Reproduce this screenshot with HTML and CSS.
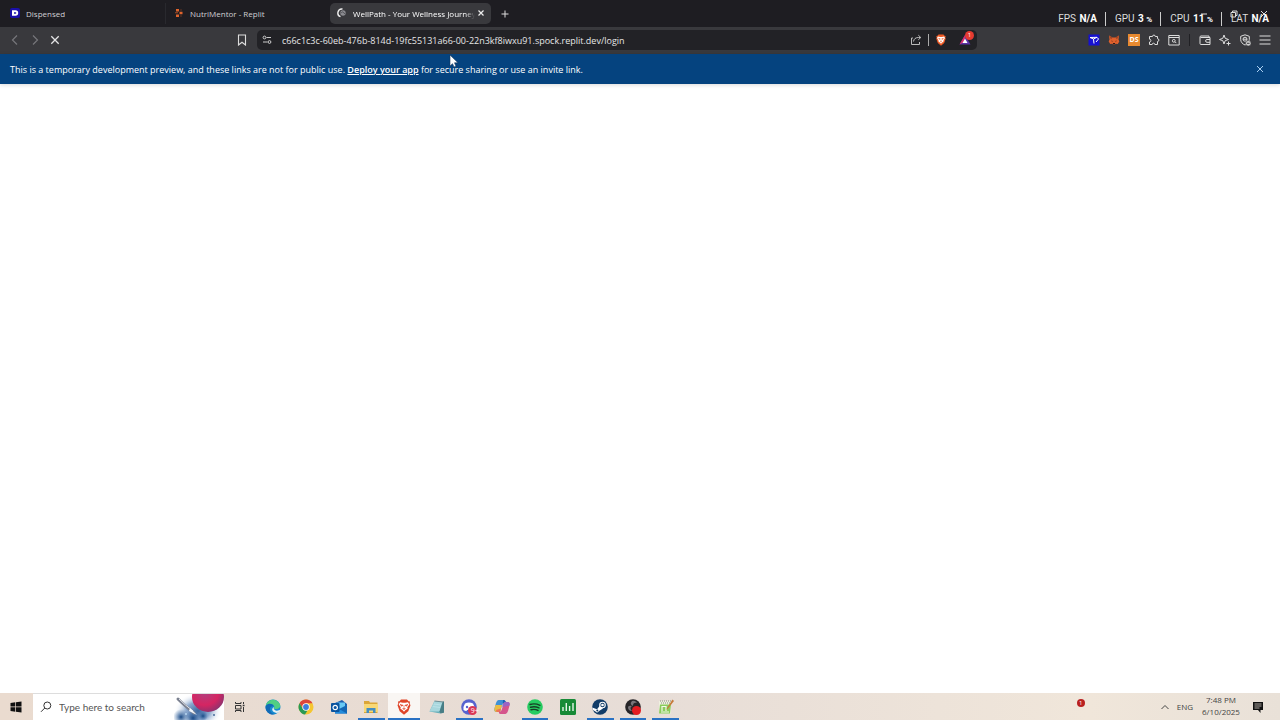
FILE: index.html
```html
<!DOCTYPE html>
<html lang="en">
<head>
    <meta charset="utf-8">
    <title>WellPath - Your Wellness Journey</title>
    <link rel="stylesheet" href="styles.css">
</head>
<body>
    <header class="tab-strip">
        <div class="tabs">
            <button class="tab">
                <svg class="favicon" viewBox="0 0 10 10"><rect width="10" height="10" rx="2" fill="#1a0fa8"/><path d="M2 2.300h3.500a2.700 2.700 0 0 1 0 5.400H2zM4 4.200v1.600h1.500a.8.8 0 0 0 0-1.600z" fill="#fff" fill-rule="evenodd"/></svg>
                <span class="tab-title">Dispensed</span>
            </button>
            <button class="tab divided">
                <svg class="favicon" viewBox="0 0 10 10"><path d="M2 1h3v2.500H2zM5.500 3.700h3v2.600h-3zM2 6.500h3V9H2z" fill="#e0642c"/><path d="M6.500 1.500h1v1h-1zM1 4.300h3v1H1zM6.500 7.500h1v1h-1z" fill="#a34b27"/></svg>
                <span class="tab-title">NutriMentor - Replit</span>
            </button>
        </div>
        <div class="tab active">
            <svg class="favicon" viewBox="0 0 10 10" fill="none"><path d="M5.500 1A4 4 0 0 0 3.500 8.700" stroke="#eee" stroke-width="1.400"/><circle cx="6" cy="5" r="2.700" fill="#8b8b90"/><path d="M4 4.500c1 .5 1-1 2-.5s0 1.500 2 1.500" stroke="#333338" stroke-width=".6"/></svg>
            <span class="tab-title">WellPath - Your Wellness Journey</span>
            <button class="icon-button tab-close" aria-label="Close tab">
                <svg class="icon-tiny" viewBox="0 0 8 8"><path d="M1.500 1.500l5 5m0-5l-5 5" stroke="#eee" stroke-width="1.200"/></svg>
            </button>
        </div>
        <button class="icon-button new-tab" aria-label="New tab">
            <svg class="icon-tiny" viewBox="0 0 8 8"><path d="M4 .5v7M.5 4h7" stroke="#ddd"/></svg>
        </button>
        <div class="window-controls">
            <button class="icon-button" aria-label="Minimize"><svg class="icon-tiny" viewBox="0 0 8 8"><path d="M1 4h6" stroke="#ddd"/></svg></button>
            <button class="icon-button" aria-label="Restore"><svg class="icon-tiny" viewBox="0 0 8 8" fill="none"><path d="M1 2.500h4.500V7H1zM2.500 2.500V1H7v4.500H5.500" stroke="#ddd"/></svg></button>
            <button class="icon-button" aria-label="Close"><svg class="icon-tiny" viewBox="0 0 8 8"><path d="M1 1l6 6m0-6L1 7" stroke="#ddd"/></svg></button>
        </div>
    </header>

    <nav class="toolbar">
        <div class="nav-buttons">
            <button class="icon-button" aria-label="Back"><svg class="icon" viewBox="0 0 12 12" fill="none"><path d="M8 1.500L3.500 6 8 10.500" stroke="#77777b" stroke-width="1.200"/></svg></button>
            <button class="icon-button" aria-label="Forward"><svg class="icon" viewBox="0 0 12 12" fill="none"><path d="M4 1.500L8.500 6 4 10.500" stroke="#77777b" stroke-width="1.200"/></svg></button>
            <button class="icon-button" aria-label="Stop"><svg class="icon" viewBox="0 0 12 12"><path d="M2.300 2.300l7.400 7.400m0-7.400L2.300 9.700" stroke="#e4e4e6" stroke-width="1.300"/></svg></button>
        </div>
        <div class="address">
            <button class="icon-button" aria-label="Bookmark"><svg class="icon" viewBox="0 0 12 12" fill="none"><path d="M2.500 1h7v10L6 8.200 2.500 11z" stroke="#ddd" stroke-width="1.100"/></svg></button>
            <div class="url-bar">
                <svg class="icon" viewBox="0 0 12 12" fill="none" stroke="#ccc"><circle cx="3.500" cy="3.500" r="1.400"/><circle cx="8.500" cy="8" r="1.400"/><path d="M5.500 3.500H10M2 8h4.500"/></svg>
                <input class="url" type="text" aria-label="Address" value="c66c1c3c-60eb-476b-814d-19fc55131a66-00-22n3kf8iwxu91.spock.replit.dev/login">
                <button class="icon-button" aria-label="Share"><svg class="icon" viewBox="0 0 12 12" fill="none" stroke="#bbb"><path d="M3 4H1.500v6.500h8V8M3.500 7.500c.3-2.500 2-4 5-4h2M8.300 1.200l2.500 2.300-2.500 2.300"/></svg></button>
                <span class="separator light"></span>
                <button class="icon-button" aria-label="Brave Shields"><svg class="icon" viewBox="0 0 12 12"><path d="M3.500.5h5l1 1.200 1.200.3-.4 1.500.4 1.300-1.500 4.300L6 11.700 2.800 9.100 1.300 4.800l.4-1.300L1.300 2l1.200-.3z" fill="#f05a24"/><path d="M3 2.600l2 .3h2l2-.3 1 1.500-1.500 2.200.2 1L7.200 8.500 6 9.700 4.800 8.500 3.300 7.300l.2-1L2 4.100z" fill="#fff"/><path d="M3.500 4.300l1.800.5-.7.700zM8.500 4.300l-1.800.5.7.7zM6 5.500v2M5 7.500l1 .6 1-.6" fill="#f05a24" stroke="#f05a24" stroke-width=".4"/></svg></button>
                <button class="icon-button rewards" aria-label="Brave Rewards">
                    <svg class="icon" viewBox="0 0 12 12"><path d="M6 1l5.500 9.500H.5z" fill="#5b32a8"/><path d="M6 1L.5 10.500 4 8.500 6 5z" fill="#d92c68"/><path d="M6 4.500l2.500 4.500H3.500z" fill="#fff"/></svg>
                    <span class="badge">1</span>
                </button>
            </div>
        </div>
        <div class="extensions">
            <button class="icon-button" aria-label="Cursor extension"><svg class="icon" viewBox="0 0 12 12" fill="none"><path d="M.5.500h11v11H.5z" fill="#1610d2"/><path d="M2 3.500l3.500 1.500L6 9.500M2 3.500l7-.2L10.500 5 8 8M5.500 5l3.500-1.700" stroke="#fff" stroke-width="1"/></svg></button>
            <button class="icon-button" aria-label="MetaMask"><svg class="icon" viewBox="0 0 12 12"><path d="M1 1.500l3.500 2h3L11 1.500l-.5 4 .8 2-1.500 2.500-2.300-.3-.5.800H5l-.5-.8-2.300.3L.7 7.500l.8-2z" fill="#e0602c"/><path d="M1 1.500l3.500 2L3 5.500zM11 1.500l-3.500 2L9 5.500z" fill="#9c4526"/><path d="M3.500 6.500l1.500.7-1.200.3zM8.500 6.500L7 7.200l1.200.3zM5 9h2v1.300H5z" fill="#2a1a18"/></svg></button>
            <button class="icon-button" aria-label="DS extension"><span class="ds">DS</span></button>
            <button class="icon-button" aria-label="Extensions"><svg class="icon" viewBox="0 0 12 12" fill="none"><path d="M1.500 2.500h3a1.400 1.400 0 0 1 2.800 0H9.500v2.200a1.400 1.400 0 0 1 0 2.800v3H6.800a1.300 1.300 0 0 0-2.600 0H1.500V8a1.400 1.400 0 0 0 0-2.800z" stroke="#ddd"/></svg></button>
            <button class="icon-button" aria-label="Page search"><svg class="icon" viewBox="0 0 12 12" fill="none" stroke="#ddd"><path d="M.8 1.500h10.400v9.500H.8zM1 3.500h10"/><circle cx="5.800" cy="6.800" r="1.400"/><path d="M7 7.800l1.300 1.300"/></svg></button>
            <span class="separator"></span>
            <button class="icon-button" aria-label="Wallet"><svg class="icon" viewBox="0 0 12 12" fill="none" stroke="#ddd"><path d="M10 3.500V2H2a1 1 0 0 0-1 1v6.500a1 1 0 0 0 1 1h9v-7H1.500M11 5.500H8a1.400 1.400 0 0 0 0 2.800h3"/></svg></button>
            <button class="icon-button" aria-label="Leo AI"><svg class="icon" viewBox="0 0 12 12" fill="none" stroke="#ddd"><path d="M5 1l1.200 3.300L9.500 5.500 6.200 6.700 5 10 3.800 6.700.5 5.500l3.300-1.200zM9.500 7.500v4M7.500 9.500h4"/></svg></button>
            <button class="icon-button" aria-label="VPN"><svg class="icon" viewBox="0 0 12 12" fill="none" stroke="#ddd"><path d="M6 .8l4.300 1.500v3.200C10.300 8 8.500 10 6 11 3.500 10 1.700 8 1.700 5.500V2.300z"/><circle cx="6" cy="5.200" r="2"/><path d="M4 5.200h4"/><circle cx="9.300" cy="9.300" r="2.700" fill="#ccc" stroke="#39393d" stroke-width=".5"/><path d="M8 9.300h2.600" stroke="#39393d"/></svg></button>
            <button class="icon-button" aria-label="Menu"><svg class="icon" viewBox="0 0 12 12"><path d="M.5 2h11M.5 6h11M.5 10h11" stroke="#ddd" stroke-width="1.200"/></svg></button>
        </div>
    </nav>

    <div class="preview-banner">
        <p class="banner-text">This is a temporary development preview, and these links are not for public use. <a href="#">Deploy your app</a> for secure sharing or use an invite link.</p>
        <button class="icon-button" aria-label="Dismiss"><svg class="icon-tiny" viewBox="0 0 8 8"><path d="M1 1l6 6m0-6L1 7" stroke="#a9cef0"/></svg></button>
    </div>

    <main class="page"></main>

    <footer class="taskbar">
        <button class="icon-button start" aria-label="Start"><svg class="icon" viewBox="0 0 12 12"><path d="M.5 2l4.800-.7v4.300H.5zM6 1.200L11.500.5v5.100H6zM.5 6.300h4.800v4.400L.5 10zM6 6.300h5.500v5.200L6 10.800z" fill="#111"/></svg></button>
        <label class="search">
            <svg class="icon" viewBox="0 0 12 12" fill="none" stroke="#333"><circle cx="7.300" cy="4.500" r="3.500"/><path d="M4.800 7L1 10.800"/></svg>
            <input type="text" placeholder="Type here to search">
            <svg class="search-art" viewBox="0 0 50 26">
                <defs>
                    <radialGradient id="planet" cx=".4" cy=".35" r=".7"><stop offset="0" stop-color="#b0407f"/><stop offset=".6" stop-color="#d52562"/><stop offset="1" stop-color="#87336f"/></radialGradient>
                    <radialGradient id="nebula"><stop offset="0" stop-color="#3a669f"/><stop offset=".5" stop-color="#8fabd0"/><stop offset="1" stop-color="#fff" stop-opacity="0"/></radialGradient>
                    <radialGradient id="cloud"><stop offset="0" stop-color="#1a4a86"/><stop offset="1" stop-color="#3d6ea8" stop-opacity="0"/></radialGradient>
                </defs>
                <ellipse cx="24" cy="17" rx="24" ry="18" fill="url(#nebula)"/>
                <circle cx="7" cy="23" r="8" fill="url(#cloud)"/>
                <circle cx="19" cy="24" r="8" fill="url(#cloud)"/>
                <circle cx="29" cy="22" r="5" fill="url(#cloud)"/>
                <ellipse cx="34" cy="3" rx="16" ry="15" fill="url(#planet)"/>
                <path d="M4 5q6 6 16 14" stroke="#7b8190" stroke-width="3" fill="none" stroke-linecap="round"/>
                <path d="M5 5q6 6 14 12" stroke="#e3e5ea" fill="none"/>
                <path d="M16 14l7 7-8-4z" fill="#eff6fc"/>
                <circle cx="40" cy="21" r="1" fill="#496b99"/><circle cx="12" cy="20" r="1" fill="#b6d6f1"/>
            </svg>
        </label>
        <button class="icon-button task-view" aria-label="Task View"><svg class="icon" viewBox="0 0 12 12" fill="none" stroke="#333"><path d="M1.500 1v1.500h5.500V1M1.500 4.500h5.500v3.500H1.500zM1.500 11V9.500h5.500V11M9.500 1v2M9.500 6v5"/><path d="M8.700 4.500h1.800" stroke-width="1.500"/></svg></button>
        <div class="apps">
            <button class="app" aria-label="Edge"><svg class="app-icon" viewBox="0 0 16 16"><circle cx="8" cy="8" r="7.500" fill="#168bd0"/><path d="M.7 7C2 1 8-.5 12 2c5 3.500 4 8-1 8-2 0-2.500-1-1.500-2C9 5.500 4 3.500.7 7z" fill="#51cf83"/><path d="M.7 7c3-4 8-2 8 .5-2-1-4.500 1-3.500 4 1 2.500 3 4 5 3.500C5 17-.5 12 .7 7z" fill="#126ab6"/><path d="M8.700 8c-.5 4 4 4.500 6.800 2.500-.7 1.500-1.500 2.500-2.500 3.300C9 14.500 5 11 8.700 8z" fill="#e4eff3"/></svg></button>
            <button class="app" aria-label="Chrome"><svg class="app-icon" viewBox="0 0 16 16"><circle cx="8" cy="8" r="7.500" fill="#f5c630"/><path d="M1.500 4.300A7.500 7.500 0 0 1 14.500 4.300H8L5 9.500z" fill="#dd463c"/><path d="M1.500 4.300L5 10l4.500 1.500-2.500 4A7.500 7.500 0 0 1 1.500 4.300z" fill="#299a55"/><circle cx="8" cy="8" r="3.700" fill="#fff"/><circle cx="8" cy="8" r="2.900" fill="#3d7edb"/></svg></button>
            <button class="app" aria-label="Outlook"><svg class="app-icon" viewBox="0 0 16 16"><path d="M4 4l7-3 5 4v9.500H4z" fill="#1d5fae"/><path d="M6 3.500h8V10H6z" fill="#68c9f5"/><path d="M4 8l6 3 6-5v8.500H4z" fill="#238ddd"/><path d="M16 6v8.500L8 10z" fill="#1266b4"/><rect x="0" y="4" width="8.500" height="9" rx="1" fill="#0b549f"/><circle cx="4.200" cy="8.500" r="2.200" stroke="#fff" stroke-width="1.200" fill="none"/></svg></button>
            <button class="app running" aria-label="File Explorer"><svg class="app-icon" viewBox="0 0 16 16"><path d="M1 2h5l1 1.500h7.500V14H1z" fill="#dba638"/><path d="M1 5h14v8H1z" fill="#f8d876"/><path d="M3.500 9h9v5H10v-2.500H6V14H3.500z" fill="#438dc2"/></svg></button>
            <button class="app running current" aria-label="Brave"><svg class="app-icon" viewBox="0 0 16 16"><path d="M5 .5h6l1.500 1.700 1.500.3-.3 2 .8 1.700-2.200 6L8 15.700l-4.300-3.500-2.200-6 .8-1.700-.3-2 1.500-.3z" fill="#df4529"/><path d="M4 3.300l2.800.5h2.400l2.800-.5 1.300 2.200-2 2.700.3 1.500L9.500 11 8 12.700 6.500 11 4.400 9.700l.3-1.500-2-2.700z" fill="#fff"/><path d="M4 5.500l3 .7-1.200 1zM12 5.500l-3 .7 1.200 1zM8 6v4M6.500 9.500L8 10.500l1.500-1" fill="#df4529" stroke="#df4529" stroke-width=".6"/></svg></button>
            <button class="app" aria-label="Notepad"><svg class="app-icon" viewBox="0 0 16 16"><path d="M5.500 2l9 1-3 11.500-11-2z" fill="#67aeb9"/><path d="M5.500 2l8 1-3 9.500-10 0z" fill="#a7d6dc"/><path d="M14 2l1 .8v11L11.500 14.500l-1-2z" fill="#487e86"/><path d="M5.500 2l8.500 1" stroke="#718d93"/><path d="M5 5l7 1M4 7.500l7 1" stroke="#c9eaf0" stroke-width=".6"/></svg></button>
            <button class="app running" aria-label="Discord"><svg class="app-icon" viewBox="0 0 16 16"><circle cx="8" cy="8" r="7.800" fill="#5663cf"/><path d="M4 4.500q4-2 8 0 2 3 1.500 6.500-1.500 1-3 1L10 11H6l-.5 1q-1.500 0-3-1Q2 7.500 4 4.500z" fill="#fff"/><circle cx="6" cy="8" r="1.200" fill="#5663cf"/><circle cx="11.500" cy="11.500" r="4.500" fill="#d93654"/></svg><span class="app-badge">9+</span></button>
            <button class="app" aria-label="Copilot"><svg class="app-icon" viewBox="0 0 16 16"><path d="M4.500 1h5c1.500 0 1.800 1 1.500 2.500h-1Q8.800 3.500 8 6l-1.500 5.500Q6 13 4.500 13H2.500C.3 13 0 11 .5 9.500L2 4Q3 1 4.500 1z" fill="#3f91d5"/><path d="M1.500 6L.5 9.500C0 11.500.5 13 2.500 13h2Q6 13 6.500 11.500L8 6z" fill="#e9bd45"/><path d="M2.500 13h2Q6 13 6.500 11.500L7 9.500 2 11z" fill="#ee7553"/><path d="M11.500 15h-5C5 15 4.700 14 5 12.500h1Q7.200 12.500 8 10l1.500-5.500Q10 3 11.500 3h2c2.200 0 2.500 2 2 3.500L14 12q-1 3-2.500 3z" fill="#d5558c"/><path d="M9 1h.5c2 0 2 2 3 2h-1Q10 3 9.500 4.500L8.500 8z" fill="#1a60ba"/><path d="M15.500 6.500C16 5 15.700 3 13.500 3h-2Q10 3 9.500 4.500L8.500 8z" fill="#9a64c4"/></svg></button>
            <button class="app running" aria-label="Spotify"><svg class="app-icon" viewBox="0 0 16 16" fill="none"><circle cx="8" cy="8" r="7.800" fill="#27cb61"/><path d="M3 5.500q5-1.500 10 .8M3.500 8.200q4.500-1.200 8.500.7M4 10.700q4-1 7 .7" stroke="#173e25" stroke-width="1.400" stroke-linecap="round"/></svg></button>
            <button class="app" aria-label="Task monitor"><svg class="app-icon" viewBox="0 0 16 16"><rect width="16" height="16" rx="1.500" fill="#188a37"/><path d="M3 8v4M6.300 4v8M9.600 7v5M13 4v8" stroke="#e4f5e8" stroke-width="1.400"/></svg></button>
            <button class="app running" aria-label="Steam"><svg class="app-icon" viewBox="0 0 16 16"><circle cx="8" cy="8" r="7.800" fill="#123c68"/><path d="M.3 8.500L5 10.300l3-3.800 3 3-4 2.500q-1.500 2.500-3.500.5L.8 11z" fill="#fff"/><circle cx="10.500" cy="6" r="3.300" fill="#fff"/><circle cx="10.500" cy="6" r="2.200" fill="#123c68"/><circle cx="10.500" cy="6" r="1.300" fill="#fff"/><circle cx="5.300" cy="11.500" r="1" fill="#123c68"/></svg></button>
            <button class="app running" aria-label="OBS Studio"><svg class="app-icon" viewBox="0 0 16 16"><circle cx="8" cy="8" r="7.800" fill="#272528"/><path d="M7 2q-3 3 1 5 0-4 4-3Q10 1 7 2zM3 8q0 4 4 4Q4 9 7 7 4 6 3 8z" fill="#777479"/><circle cx="11.500" cy="11.500" r="4.500" fill="#e41c21"/></svg></button>
            <button class="app running" aria-label="Notepad++"><svg class="app-icon" viewBox="0 0 16 16"><path d="M1 2h12v12.500H1z" fill="#eef0df"/><path d="M2 5.500h11l-1 9H1z" fill="#8acb5c"/><path d="M2 2h11M3 4h9" stroke="#878c7e" stroke-dasharray="1 1"/><path d="M4 12V7.500h4V12M3 13h8" stroke="#f4fbec" stroke-width="1.200" fill="none"/><path d="M14.500.5L9 9l-.5 1.700L10 9.500 16 2z" fill="#c67a39"/></svg></button>
        </div>
        <div class="tray">
            <span class="tray-alert">1</span>
            <button class="icon-button" aria-label="Show hidden icons"><svg class="icon-tiny" viewBox="0 0 8 8" fill="none"><path d="M.5 6L4 2.500 7.500 6" stroke="#444"/></svg></button>
            <button class="language">ENG</button>
            <div class="clock"><time>7:48 PM</time><span>6/10/2025</span></div>
            <button class="icon-button" aria-label="Notifications"><svg class="icon" viewBox="0 0 12 12"><path d="M1 1h10v8H8.500v3L6 9H1z" fill="#111"/><path d="M2.500 3h7M2.500 5h7M2.500 7h5" stroke="#eee5dc" stroke-width=".7"/></svg></button>
        </div>
    </footer>

    <div class="stats">
        <span>FPS <b>N/A</b></span>
        <span>GPU <b>3 <small>%</small></b></span>
        <span>CPU <b>11 <small>%</small></b></span>
        <span>LAT <b>N/A</b></span>
    </div>
    <svg class="cursor" viewBox="0 0 10 14"><path d="M1 1v11l2.500-2.300L5 13l2-.8-1.500-3.400H9z" fill="#fff" stroke="#15365b" stroke-width=".6"/></svg>
</body>
</html>
```
FILE: styles.css
```css
:root {
    --strip: #1e1d22;
    --toolbar: #39393d;
    --url: #222226;
    --banner: #05437f;
    --accent: #2a72c4;
}

* {
    box-sizing: border-box;
}

body {
    margin: 0;
    min-height: 100vh;
    display: flex;
    flex-direction: column;
    background: #fff;
    font-family: "Open Sans", "Noto Sans", sans-serif;
    font-size: 9px;
}

button,
input {
    margin: 0;
    padding: 0;
    border: 0;
    background: none;
    color: inherit;
    font: inherit;
}

svg {
    display: block;
    flex: none;
}

.icon-button {
    display: flex;
    align-items: center;
    justify-content: center;
    flex: none;
}

.icon {
    width: 12px;
    height: 12px;
}

.icon-tiny {
    width: 8px;
    height: 8px;
}

/* tabs */
.tab-strip {
    display: flex;
    align-items: center;
    height: 27px;
    background: var(--strip);
    color: #d0d0d3;
    font-size: 8px;
}

.tabs {
    display: flex;
}

.tab {
    display: flex;
    align-items: center;
    gap: 6px;
    width: 165px;
    height: 21px;
    padding: 0 10px 1px;
    text-align: left;
}

.tab.divided {
    padding-left: 8px;
    border-left: 1px solid #29292e;
}

.tab.active {
    width: 161px;
    padding: 0 6px 1px 7px;
    border-radius: 5px;
    background: var(--toolbar);
    color: #fff;
}

.favicon {
    width: 10px;
    height: 10px;
}

.tab-title {
    overflow: hidden;
    white-space: nowrap;
}

.active .tab-title {
    flex: 1;
    margin-right: -4px;
    mask-image: linear-gradient(to right, #000 92%, transparent);
}

.new-tab {
    width: 28px;
}

.window-controls {
    display: flex;
    gap: 22px;
    margin-left: auto;
    padding-right: 12px;
}

/* address bar */
.toolbar {
    display: grid;
    grid-template-columns: 227fr 741fr 294fr;
    align-items: center;
    height: 27px;
    padding: 0 9px 1px;
    background: var(--toolbar);
}

.nav-buttons {
    display: flex;
    gap: 8px;
}

.address {
    display: flex;
    align-items: center;
    gap: 9px;
}

.url-bar {
    display: flex;
    align-items: center;
    flex: 1;
    gap: 6px;
    height: 20px;
    padding: 0 6px 0 4px;
    border-radius: 5px;
    background: var(--url);
}

.url {
    flex: 1;
    min-width: 0;
    height: 18px;
    padding-left: 3px;
    color: #e6e6e7;
}

.separator {
    width: 1px;
    height: 12px;
    margin: 0 1px;
    background: #202024;
}

.separator.light {
    margin: 0;
    background: #aaa;
}

.rewards {
    position: relative;
    margin-left: 6px;
}

.badge {
    position: absolute;
    top: -3px;
    right: -3px;
    width: 9px;
    height: 9px;
    border-radius: 50%;
    background: #e53a31;
    color: #fff;
    font-size: 6px;
    line-height: 9px;
}

.extensions {
    display: flex;
    align-items: center;
    justify-content: flex-end;
    gap: 8px;
}

.ds {
    width: 12px;
    height: 12px;
    background: #e88a30;
    color: #fff;
    font-size: 7px;
    font-weight: bold;
    line-height: 12px;
}

/* preview banner */
.preview-banner {
    display: flex;
    align-items: center;
    justify-content: space-between;
    height: 30px;
    padding: 0 16px 0 10px;
    background: var(--banner);
    color: #fff;
    box-shadow: 0 1px 4px rgba(0, 0, 0, 0.15);
}

.banner-text {
    margin: 0;
}

.banner-text a {
    color: #fff;
    font-weight: 600;
}

.page {
    flex: 1;
}

/* taskbar */
.taskbar {
    display: flex;
    height: 27px;
    background: linear-gradient(to right, #eadbcf, #e7ddd7 50%, #f0e6da 85%, #e9e1d8);
    color: #444;
}

.start,
.task-view {
    width: 32px;
    margin-right: 1px;
}

.search {
    display: flex;
    align-items: center;
    width: 191px;
    padding-left: 7px;
    border-top: 1px solid #ddd;
    background: #fff;
}

.search input {
    flex: 1;
    min-width: 0;
    padding-left: 7px;
    font-family: Lato, sans-serif;
    font-size: 10px;
}

.search input::placeholder {
    color: #555;
}

.search-art {
    width: 50px;
    height: 26px;
}

.apps {
    display: grid;
    grid-template-columns: repeat(13, 1fr);
    width: 425px;
}

.app {
    position: relative;
    display: flex;
    align-items: center;
    justify-content: center;
}

.running::after {
    content: "";
    position: absolute;
    right: 3px;
    bottom: 0;
    left: 3px;
    height: 2px;
    background: var(--accent);
}

.current {
    background: #f9f6f3;
}

.current::after {
    right: 0;
    left: 0;
}

.app-icon {
    width: 16px;
    height: 16px;
}

.app-badge {
    position: absolute;
    right: 7px;
    bottom: 5px;
    color: #fff;
    font-size: 7px;
    line-height: 9px;
}

.tray {
    display: flex;
    align-items: center;
    gap: 8px;
    margin-left: auto;
    padding-right: 16px;
}

.tray-alert {
    width: 8px;
    height: 8px;
    margin: 0 68px 8px 0;
    border-radius: 50%;
    background: #b92020;
    color: #fff;
    font-size: 6px;
    line-height: 8px;
    text-align: center;
}

.clock {
    display: flex;
    flex-direction: column;
    width: 40px;
    margin-right: 3px;
    padding-bottom: 2px;
    font-size: 8px;
    line-height: 12px;
    text-align: center;
}

.language {
    font-size: 8px;
}

/* overlays */
.stats {
    position: absolute;
    top: 12px;
    right: 11px;
    display: flex;
    color: #ddd;
    font-family: Roboto, sans-serif;
    font-size: 10px;
    line-height: 13px;
    white-space: nowrap;
}

.stats span + span {
    margin-left: 8px;
    padding-left: 9px;
    border-left: 1px solid #ccc;
}

.stats b {
    margin-left: 1px;
    color: #fff;
}

.stats small {
    font-size: 8px;
}

.cursor {
    position: absolute;
    top: 54px;
    left: 449px;
    width: 10px;
    height: 14px;
}
```
